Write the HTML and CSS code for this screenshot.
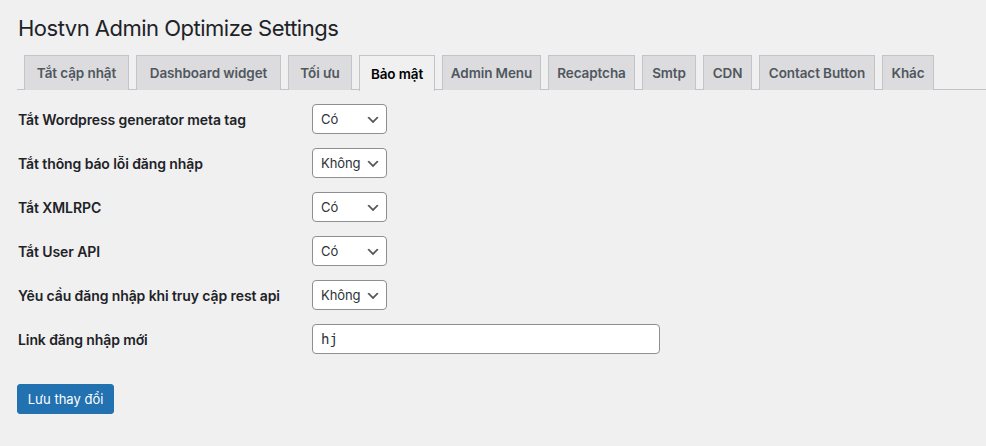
FILE: index.html
```html
<!DOCTYPE html>
<html lang="vi">
<head>
<meta charset="utf-8">
<title>Hostvn Admin Optimize Settings</title>
<link rel="stylesheet" href="styles.css">
</head>
<body>
<div class="wrap">
  <h1 class="page-title">Hostvn Admin Optimize Settings</h1>
  <nav class="tabs">
    <a class="tab">Tắt cập nhật</a>
    <a class="tab">Dashboard widget</a>
    <a class="tab">Tối ưu</a>
    <a class="tab active">Bảo mật</a>
    <a class="tab">Admin Menu</a>
    <a class="tab">Recaptcha</a>
    <a class="tab">Smtp</a>
    <a class="tab">CDN</a>
    <a class="tab">Contact Button</a>
    <a class="tab">Khác</a>
  </nav>
  <div class="form">
    <div class="row">
      <div class="label">Tắt Wordpress generator meta tag</div>
      <div class="select"><span>Có</span><svg class="chev" viewBox="0 0 20 20"><path d="M5 6l5 5 5-5 2 1-7 7-7-7 2-1z"/></svg></div>
    </div>
    <div class="row">
      <div class="label">Tắt thông báo lỗi đăng nhập</div>
      <div class="select"><span>Không</span><svg class="chev" viewBox="0 0 20 20"><path d="M5 6l5 5 5-5 2 1-7 7-7-7 2-1z"/></svg></div>
    </div>
    <div class="row">
      <div class="label">Tắt XMLRPC</div>
      <div class="select"><span>Có</span><svg class="chev" viewBox="0 0 20 20"><path d="M5 6l5 5 5-5 2 1-7 7-7-7 2-1z"/></svg></div>
    </div>
    <div class="row">
      <div class="label">Tắt User API</div>
      <div class="select"><span>Có</span><svg class="chev" viewBox="0 0 20 20"><path d="M5 6l5 5 5-5 2 1-7 7-7-7 2-1z"/></svg></div>
    </div>
    <div class="row">
      <div class="label">Yêu cầu đăng nhập khi truy cập rest api</div>
      <div class="select"><span>Không</span><svg class="chev" viewBox="0 0 20 20"><path d="M5 6l5 5 5-5 2 1-7 7-7-7 2-1z"/></svg></div>
    </div>
    <div class="row">
      <div class="label">Link đăng nhập mới</div>
      <div class="input">hj</div>
    </div>
  </div>
  <div class="submit">
    <button class="button-primary">Lưu thay đổi</button>
  </div>
</div>
</body>
</html>
```
FILE: styles.css
```css
* { box-sizing: border-box; }
html, body {
  margin: 0;
  padding: 0;
  background: #f0f0f1;
  color: #1d2327;
  font-family: Inter, "Noto Sans", "Liberation Sans", sans-serif;
}
.wrap {
  padding: 13px 0 0 17px;
}
.page-title {
  margin: 0 0 0 1px;
  font-size: 22px;
  font-weight: 400;
  line-height: 30px;
  color: #1d2327;
  letter-spacing: -0.5px;
}
.tabs {
  margin-top: 12px;
  display: flex;
  border-bottom: 1px solid #c3c4c7;
  height: 35px;
}
.tab {
  margin-left: 7px;
  height: 35px;
  padding: 0;
  display: flex;
  align-items: center;
  justify-content: center;
  font-size: 13.5px;
  font-weight: 600;
  letter-spacing: -0.1px;
  color: #50575e;
  background: #dcdcde;
  border: 1px solid #c3c4c7;
  border-bottom: none;
  white-space: nowrap;
}
.tab:nth-child(1) { width: 105px; }
.tab:nth-child(2) { width: 145px; }
.tab:nth-child(3) { width: 64px; }
.tab:nth-child(4) { width: 76px; }
.tab:nth-child(5) { width: 99px; }
.tab:nth-child(6) { width: 87px; }
.tab:nth-child(7) { width: 54px; }
.tab:nth-child(8) { width: 49px; }
.tab:nth-child(9) { width: 116px; }
.tab:nth-child(10) { width: 52px; }
.tab.active {
  background: #f0f0f1;
  color: #000;
  height: 36px;
}
.form {
  margin-top: 7px;
}
.row {
  display: flex;
  align-items: center;
  padding: 7px 0;
}
.label {
  width: 295px;
  padding-left: 1px;
  font-size: 14px;
  font-weight: 600;
  letter-spacing: -0.1px;
  color: #1d2327;
}
.select {
  width: 75px;
  height: 30px;
  display: flex;
  align-items: center;
  justify-content: space-between;
  padding: 0 5px 0 8px;
  border: 1px solid #8c8f94;
  border-radius: 4px;
  background: #fff;
  font-size: 13px;
  letter-spacing: -0.1px;
  color: #2c3338;
}
.chev {
  width: 16px;
  height: 16px;
  margin-top: 1px;
  flex: none;
  fill: #555;
}
.input {
  width: 348px;
  height: 30px;
  display: flex;
  align-items: center;
  padding: 0 8px;
  border: 1px solid #8c8f94;
  border-radius: 4px;
  background: #fff;
  font-family: "DejaVu Sans Mono", "Liberation Mono", monospace;
  font-size: 14px;
  color: #2c3338;
}
.submit {
  margin-top: 23px;
}
.button-primary {
  height: 30px;
  width: 97px;
  padding: 0;
  background: #2271b1;
  border: 1px solid #2271b1;
  border-radius: 3px;
  color: #fff;
  font-family: Inter, "Noto Sans", "Liberation Sans", sans-serif;
  font-size: 13px;
  font-weight: 400;
}
```
